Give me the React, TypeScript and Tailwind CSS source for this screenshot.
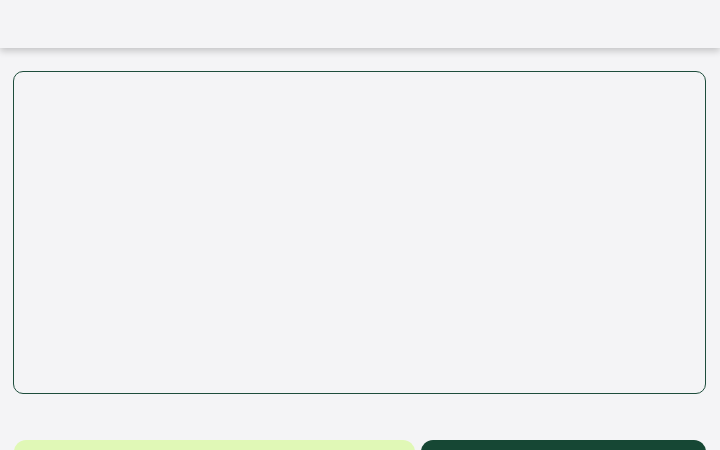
export default function App() {
  return (
    <div className="min-h-screen bg-[#f4f4f6] flex flex-col overflow-hidden h-[450px]" style={{ fontFamily: '"Liberation Sans", Arial, sans-serif' }}>
      <header className="h-12 shrink-0 bg-[#f4f4f6] shadow-[0_3px_7px_rgba(0,0,0,0.2)] relative z-10"></header>
      <main className="flex flex-col px-[13px] pr-[14px] pt-[23px]">
        <div className="h-[323px] rounded-[10px] border border-[#1e4d3c] bg-[#f4f4f6]"></div>
        <div className="mt-[46px] flex gap-[6px] pl-px">
          <button className="w-[401px] h-12 rounded-[12px] bg-[#e0f8b6]"></button>
          <button className="flex-1 h-12 rounded-[12px] bg-[#164734]"></button>
        </div>
      </main>
    </div>
  );
}
